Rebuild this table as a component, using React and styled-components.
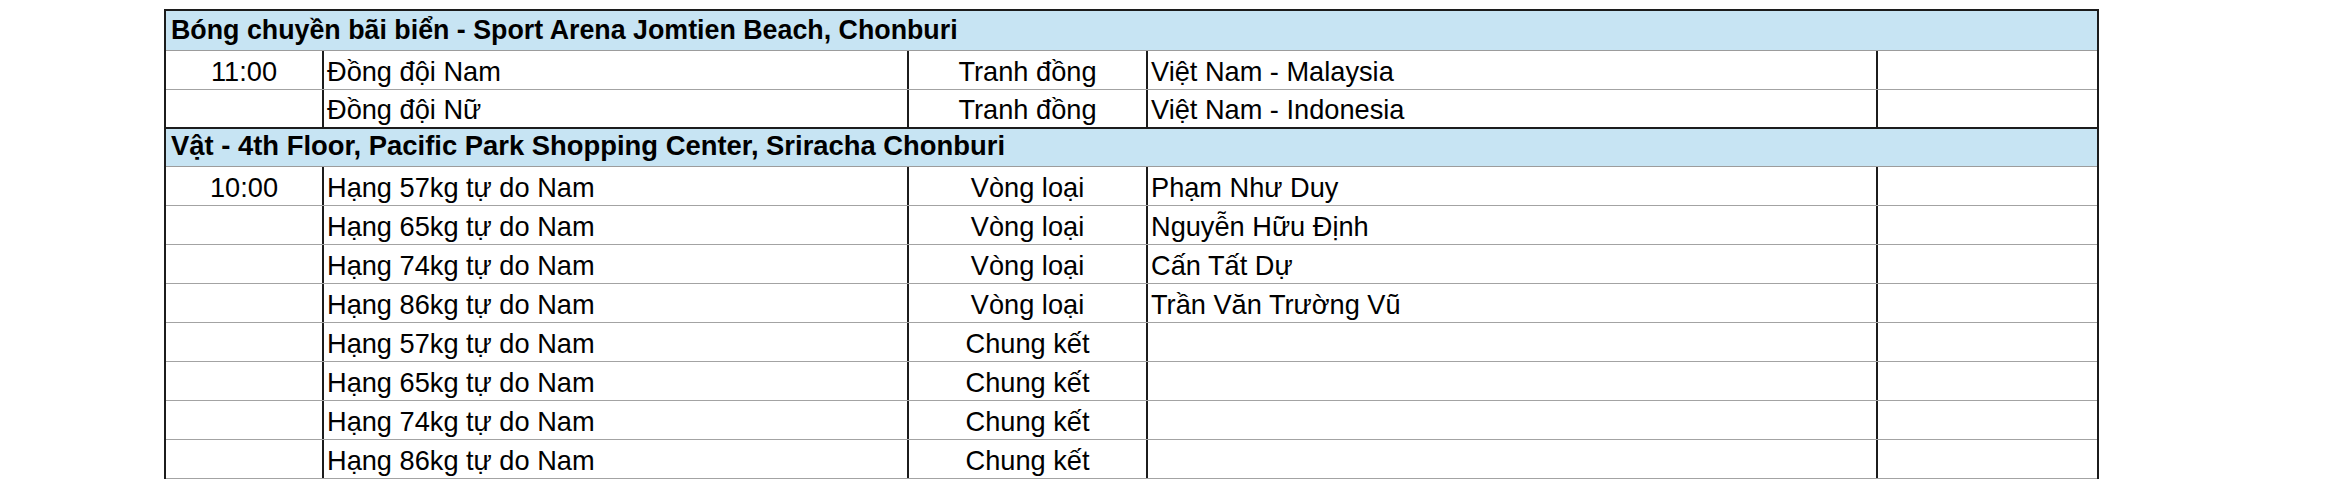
import React from 'react';
import styled, { createGlobalStyle } from 'styled-components';

const GlobalStyle = createGlobalStyle`
  html, body {
    margin: 0;
    padding: 0;
    background: #fff;
  }

  body {
    font-family: "Liberation Sans", Arial, sans-serif;
    color: #000;
  }
`;

const Page = styled.div`
  width: 2340px;
  height: 484px;
  padding: 9px 0 0 164px;
  box-sizing: border-box;
  overflow: hidden;
`;

const Sheet = styled.div`
  width: 1935px;
  border: 2px solid #1c1c1c;
  border-bottom: none;
  box-sizing: border-box;
`;

const VenueRow = styled.div`
  height: ${props => props.$height}px;
  background-color: #c7e4f3;
  border-bottom: 1px solid #9c9c9c;
  display: flex;
  align-items: flex-end;
  padding: 0 0 4px 5px;
  box-sizing: border-box;
  font-weight: bold;
  font-size: ${props => props.$size}px;
  line-height: 1.15;
  white-space: nowrap;
`;

const EventRow = styled.div`
  display: grid;
  grid-template-columns: 158px 585px 239px 730px 1fr;
  height: 39px;
  border-bottom: ${props => (props.$last ? '2px solid #1c1c1c' : '1px solid #a3a3a3')};
  box-sizing: border-box;
`;

const Cell = styled.div`
  display: flex;
  align-items: flex-end;
  justify-content: ${props => (props.$center ? 'center' : 'flex-start')};
  padding: 0 0 2px ${props => (props.$center ? 0 : 3)}px;
  border-right: ${props => (props.$end ? 'none' : '2px solid #1c1c1c')};
  box-sizing: border-box;
  font-size: 27.2px;
  line-height: 1.15;
  white-space: nowrap;
  overflow: hidden;
`;

const groups = [
  {
    venue: 'Bóng chuyền bãi biển - Sport Arena Jomtien Beach, Chonburi',
    height: 40,
    size: 26.8,
    rows: [
      { time: '11:00', event: 'Đồng đội Nam', stage: 'Tranh đồng', who: 'Việt Nam - Malaysia' },
      { time: '', event: 'Đồng đội Nữ', stage: 'Tranh đồng', who: 'Việt Nam - Indonesia' },
    ],
  },
  {
    venue: 'Vật - 4th Floor, Pacific Park Shopping Center, Sriracha Chonburi',
    height: 38,
    size: 27.4,
    rows: [
      { time: '10:00', event: 'Hạng 57kg tự do Nam', stage: 'Vòng loại', who: 'Phạm Như Duy' },
      { time: '', event: 'Hạng 65kg tự do Nam', stage: 'Vòng loại', who: 'Nguyễn Hữu Định' },
      { time: '', event: 'Hạng 74kg tự do Nam', stage: 'Vòng loại', who: 'Cấn Tất Dự' },
      { time: '', event: 'Hạng 86kg tự do Nam', stage: 'Vòng loại', who: 'Trần Văn Trường Vũ' },
      { time: '', event: 'Hạng 57kg tự do Nam', stage: 'Chung kết', who: '' },
      { time: '', event: 'Hạng 65kg tự do Nam', stage: 'Chung kết', who: '' },
      { time: '', event: 'Hạng 74kg tự do Nam', stage: 'Chung kết', who: '' },
      { time: '', event: 'Hạng 86kg tự do Nam', stage: 'Chung kết', who: '' },
    ],
  },
];

export default function App() {
  return (
    <Page>
      <GlobalStyle />
      <Sheet>
        {groups.map((group, gi) => (
          <React.Fragment key={group.venue}>
            <VenueRow $height={group.height} $size={group.size}>{group.venue}</VenueRow>
            {group.rows.map((row, ri) => (
              <EventRow
                key={`${gi}-${ri}`}
                $last={gi < groups.length - 1 && ri === group.rows.length - 1}
              >
                <Cell $center>{row.time}</Cell>
                <Cell>{row.event}</Cell>
                <Cell $center>{row.stage}</Cell>
                <Cell>{row.who}</Cell>
                <Cell $end />
              </EventRow>
            ))}
          </React.Fragment>
        ))}
      </Sheet>
    </Page>
  );
}
